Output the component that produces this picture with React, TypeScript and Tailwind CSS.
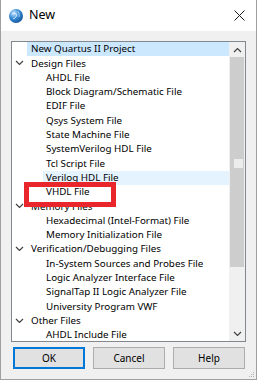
import React from 'react';

interface TreeRow {
    label: string;
    depth: number;
    expandable?: boolean;
    selected?: boolean;
    hover?: boolean;
}

const rows: TreeRow[] = [
    {label: 'New Quartus II Project', depth: 0, selected: true},
    {label: 'Design Files', depth: 0, expandable: true},
    {label: 'AHDL File', depth: 1},
    {label: 'Block Diagram/Schematic File', depth: 1},
    {label: 'EDIF File', depth: 1},
    {label: 'Qsys System File', depth: 1},
    {label: 'State Machine File', depth: 1},
    {label: 'SystemVerilog HDL File', depth: 1},
    {label: 'Tcl Script File', depth: 1},
    {label: 'Verilog HDL File', depth: 1, hover: true},
    {label: 'VHDL File', depth: 1},
    {label: 'Memory Files', depth: 0, expandable: true},
    {label: 'Hexadecimal (Intel-Format) File', depth: 1},
    {label: 'Memory Initialization File', depth: 1},
    {label: 'Verification/Debugging Files', depth: 0, expandable: true},
    {label: 'In-System Sources and Probes File', depth: 1},
    {label: 'Logic Analyzer Interface File', depth: 1},
    {label: 'SignalTap II Logic Analyzer File', depth: 1},
    {label: 'University Program VWF', depth: 1},
    {label: 'Other Files', depth: 0, expandable: true},
    {label: 'AHDL Include File', depth: 1},
];

function Chevron({up = false}: {up?: boolean}) {
    return (
        <svg width="9" height="6" viewBox="0 0 9 6" className="block">
            <polyline
                points={up ? '1,5 4.5,1.5 8,5' : '1,1 4.5,4.5 8,1'}
                fill="none"
                stroke="#404040"
                strokeWidth="1.2"
            />
        </svg>
    );
}

function TitleIcon() {
    return (
        <svg width="16" height="16" viewBox="0 0 16 16">
            <defs>
                <radialGradient id="globe" cx="0.35" cy="0.3" r="0.8">
                    <stop offset="0" stopColor="#cfe8ff" />
                    <stop offset="0.45" stopColor="#3b8fd9" />
                    <stop offset="1" stopColor="#0e4f94" />
                </radialGradient>
            </defs>
            <circle cx="8" cy="8" r="7" fill="url(#globe)" />
            <path d="M4 6 Q7 4 9 7 Q8 10 5 11" fill="none" stroke="#e6f3ff" strokeWidth="1" opacity="0.8" />
            <path d="M10 3 Q12 6 11 9" fill="none" stroke="#e6f3ff" strokeWidth="0.8" opacity="0.7" />
        </svg>
    );
}

function CloseIcon() {
    return (
        <svg width="11" height="11" viewBox="0 0 11 11">
            <path d="M0.5 0.5 L10.5 10.5 M10.5 0.5 L0.5 10.5" stroke="#1a1a1a" strokeWidth="1" />
        </svg>
    );
}

function Button({label, focused = false}: {label: string; focused?: boolean}) {
    return (
        <button
            className={
                focused
                    ? 'w-[72px] h-[22px] bg-[#e1e1e1] border-2 border-[#0078d7] text-[10px] text-black'
                    : 'w-[72px] h-[22px] bg-[#e1e1e1] border border-[#adadad] text-[10px] text-black'
            }
        >
            {label}
        </button>
    );
}

export default function App() {
    return (
        <div
            className="relative w-[257px] h-[380px] bg-[#f0f0f0] border-x border-b border-[#a0a0a0] flex flex-col overflow-hidden"
            style={{fontFamily: '"Noto Sans", "Open Sans", sans-serif'}}
        >
            {/* Barre de titre */}
            <div className="h-[31px] bg-white flex items-center pl-[7px] pr-[11px] shrink-0">
                <TitleIcon />
                <span className="ml-[5px] text-[12.5px] text-black leading-none">New</span>
                <span className="ml-auto">
                    <CloseIcon />
                </span>
            </div>

            {/* Liste */}
            <div className="mt-[10px] mx-[10px] h-[301px] border border-[#828790] bg-white flex shrink-0">
                <div className="flex-1 overflow-hidden">
                    {rows.map((row) => (
                        <div key={row.label} className="relative h-[14.3px] flex items-center">
                            {row.selected && <div className="absolute inset-y-0 left-[15px] right-0 bg-[#cce8ff]" />}
                            {row.hover && <div className="absolute inset-y-0 left-[31px] right-0 bg-[#e5f3ff]" />}
                            {row.expandable && (
                                <div className="absolute left-[3px] top-[4px]">
                                    <Chevron />
                                </div>
                            )}
                            <span
                                className={
                                    row.depth === 0
                                        ? 'relative pl-[19px] text-[9.8px] text-black whitespace-nowrap leading-none'
                                        : 'relative pl-[34px] text-[9.8px] text-black whitespace-nowrap leading-none'
                                }
                            >
                                {row.label}
                            </span>
                        </div>
                    ))}
                </div>
                {/* Barre de défilement */}
                <div className="w-[16px] bg-[#f0f0f0] flex flex-col">
                    <div className="h-[15px] flex items-center justify-center">
                        <Chevron up />
                    </div>
                    <div className="relative h-[210px] mx-[1px] bg-[#cdcdcd]">
                        <div className="absolute left-[4px] top-[102px] w-[9px] h-[9px] bg-[#ececec]" />
                    </div>
                    <div className="flex-1" />
                    <div className="h-[15px] flex items-center justify-center">
                        <Chevron />
                    </div>
                </div>
            </div>

            {/* Boutons */}
            <div className="mt-[5px] pl-[12px] flex gap-[8px]">
                <Button label="OK" focused />
                <Button label="Cancel" />
                <Button label="Help" />
            </div>

            {/* Poignée de redimensionnement */}
            <div className="absolute right-[2px] bottom-[2px] grid grid-cols-3 gap-[1px]">
                <span />
                <span />
                <span className="w-[1px] h-[1px] bg-[#b0b0b0]" />
                <span />
                <span className="w-[1px] h-[1px] bg-[#b0b0b0]" />
                <span className="w-[1px] h-[1px] bg-[#b0b0b0]" />
                <span className="w-[1px] h-[1px] bg-[#b0b0b0]" />
                <span className="w-[1px] h-[1px] bg-[#b0b0b0]" />
                <span className="w-[1px] h-[1px] bg-[#b0b0b0]" />
            </div>

            {/* Cadre rouge d'annotation */}
            <div className="absolute left-[23px] top-[182px] w-[92px] h-[25px] border-[5px] border-[#e8262b]" />
        </div>
    );
}
